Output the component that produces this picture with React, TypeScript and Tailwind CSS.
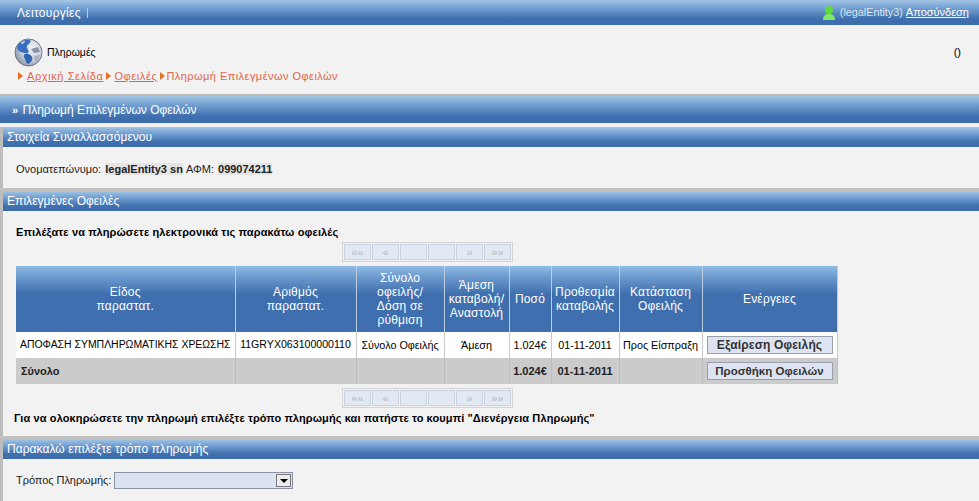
const barGradient = "bg-[linear-gradient(to_bottom,#a3c6e6_0%,#6f9ccf_35%,#3f6fae_75%,#3d6cab_100%)]";
const thGradient = "bg-[linear-gradient(to_bottom,#8fbce3_0px,#6f9ccf_10px,#3f6fae_28px)]";

function Globe() {
  return (
    <svg width="29" height="29" viewBox="0 0 29 29">
      <defs>
        <radialGradient id="g" cx="0.65" cy="0.35" r="0.75">
          <stop offset="0" stopColor="#f2f4f8" />
          <stop offset="0.6" stopColor="#c4cbd8" />
          <stop offset="1" stopColor="#7f8a9d" />
        </radialGradient>
      </defs>
      <circle cx="14.5" cy="14.5" r="13.5" fill="url(#g)" stroke="#6d7686" />
      <path d="M4 7c3-4 8-6 12-5 2 2-2 4-3 6-1 3 3 4 1 7-3 1-5-1-7-1-3-1-5-4-3-7z" fill="#3a6fc0" />
      <path d="M7 5c1-1 3-2 4-2 0 1-2 3-3 3z" fill="#cfe0f5" />
      <path d="M11 16c3-1 6 1 7 3 1 2 0 5-4 7-2-1-2-3-3-5-1-2-2-4 0-5z" fill="#2f63b4" />
      <path d="M17 11l7-2 2 5-6 1z" fill="#8a93a4" />
      <path d="M20 18l6-1-2 6-3 0z" fill="#aab1be" />
    </svg>
  );
}

function User() {
  return (
    <svg width="14" height="16" viewBox="0 0 14 16">
      <circle cx="7" cy="5" r="4" fill="#5fdc3c" />
      <path d="M1 15c0-4 2-5 4-6h4c2 1 4 2 4 6z" fill="#7fe86a" />
    </svg>
  );
}

function Crumb() {
  return <span className="w-0 h-0 border-y-[4px] border-y-transparent border-l-[5px] border-l-[#e8702a] mx-[3px]" />;
}

function Section({ title, className, children }: { title: string; className: string; children: React.ReactNode }) {
  return (
    <section className={"border-l-[3px] border-[#bdbdbd] " + className}>
      <h2 className={"h-[20px] pl-[4px] leading-[21px] text-white text-[12px] tracking-[0.05px] font-normal " + barGradient}>{title}</h2>
      {children}
    </section>
  );
}

function Pager() {
  const labels = ["««", "«", "", "", "»", "»»"];
  return (
    <div className="flex gap-[1px] w-fit h-[20px] ml-[342px] p-[1px] border border-[#d4d4d4] bg-[#f2f2f2]">
      {labels.map((label, i) => (
        <div key={i} className="w-[27px] border border-[#c9d2de] bg-[#e3e9f3] text-[#b4b9c2] text-[11px] leading-[15px] text-center">
          {label}
        </div>
      ))}
    </div>
  );
}

const th = "border-r border-[#b9cde3] px-[1px] text-white font-normal text-[12px] tracking-[0.2px] leading-[14px] text-center align-middle " + thGradient;
const td = "border-r border-[#c9c9c9] bg-white text-[10.8px] text-black px-[4px] text-center h-[26px] whitespace-nowrap";
const tf = "border-r border-[#bdbdbd] bg-[#cbcbcb] text-[11px] font-bold text-[#222] px-[4px] text-center h-[26px] whitespace-nowrap";
const btn = "h-[18px] w-[126px] border border-[#9a9fae] bg-[#dde3f0] text-[#333] font-bold leading-[15px] text-center";

export default function App() {
  return (
    <div className="w-[979px] h-[501px] overflow-hidden bg-[#f2f2f2] font-['Liberation_Sans',Arial,sans-serif] text-[11px] text-black">
      <header className={"flex items-center justify-between h-[25px] text-white " + barGradient}>
        <div className="flex items-center pl-[17px]">
          <span className="text-[12px] tracking-[0.3px]">Λειτουργίες</span>
          <span className="ml-[6px] w-px h-[10px] bg-[#b7cde6]" />
        </div>
        <div className="flex items-center pr-[10px] text-[11px]">
          <User />
          <span className="ml-[4px] text-[#d8e4f2] text-[10.8px]">(legalEntity3)</span>
          <a className="ml-[3px] underline">Αποσύνδεση</a>
        </div>
      </header>

      <div className="h-[69px] pt-[13px] pl-[14px]">
        <div className="flex items-center gap-[4px]">
          <Globe />
          <span className="text-[10.5px] mt-[1px]">Πληρωμές</span>
          <span className="ml-auto mr-[18px] text-[11px]">()</span>
        </div>
        <div className="flex items-center pl-[1px] mt-[1px] text-[11px] tracking-[0.6px] text-[#e0674a]">
          <Crumb />
          <a className="underline ml-[1px]">Αρχική Σελίδα</a>
          <Crumb />
          <a className="underline">Οφειλές</a>
          <Crumb />
          <span className="tracking-[0.45px] -ml-[2px]">Πληρωμή Επιλεγμένων Οφειλών</span>
        </div>
      </div>

      <div className="h-[2px] bg-[#bcbcbc]" />
      <div className={"h-[27px] pl-[12px] leading-[28px] text-white text-[12px] " + barGradient}>
        <span className="font-bold text-[11px] mr-[1px]">»</span> Πληρωμή Επιλεγμένων Οφειλών
      </div>
      <div className="h-[4px] bg-[#f2f2f2]" />

      <Section title="Στοιχεία Συναλλασσόμενου" className="h-[61px]">
        <p className="pt-[14px] pl-[13px] text-[#222]">
          Ονοματεπώνυμο: <b className="ml-[1px] bg-[#e4e4e4]">legalEntity3 sn</b> ΑΦΜ: <b className="ml-[1px] bg-[#e4e4e4]">099074211</b>
        </p>
      </Section>
      <div className="h-[3px] bg-[#c2c2c2]" />

      <Section title="Επιλεγμένες Οφειλές" className="h-[245px]">
        <p className="pt-[14px] pl-[13px] h-[31px] font-bold tracking-[0.13px] leading-[15px]">Επιλέξατε να πληρώσετε ηλεκτρονικά τις παρακάτω οφειλές</p>
        <div className="-ml-[3px]">
          <Pager />
        </div>
        <table className="ml-[13px] mt-[4px] w-[821px] table-fixed border-collapse">
          <colgroup>
            <col className="w-[219px]" />
            <col className="w-[121px]" />
            <col className="w-[88px]" />
            <col className="w-[65px]" />
            <col className="w-[42px]" />
            <col className="w-[68px]" />
            <col className="w-[83px]" />
            <col className="w-[135px]" />
          </colgroup>
          <thead>
            <tr className="h-[66px]">
              <th className={th}>Είδος<br />παραστατ.</th>
              <th className={th}>Αριθμός<br />παραστατ.</th>
              <th className={th}>Σύνολο<br />οφειλής/<br />Δόση σε<br />ρύθμιση</th>
              <th className={th}>Άμεση<br />καταβολή/<br />Αναστολή</th>
              <th className={th}>Ποσό</th>
              <th className={th}>Προθεσμία<br />καταβολής</th>
              <th className={th}>Κατάσταση<br />Οφειλής</th>
              <th className={th}>Ενέργειες</th>
            </tr>
          </thead>
          <tbody>
            <tr>
              <td className={td + " !text-[10.45px]"}>ΑΠΟΦΑΣΗ ΣΥΜΠΛΗΡΩΜΑΤΙΚΗΣ ΧΡΕΩΣΗΣ</td>
              <td className={td + " !text-[10.6px]"}>11GRYX063100000110</td>
              <td className={td}>Σύνολο Οφειλής</td>
              <td className={td}>Άμεση</td>
              <td className={td + " !px-0"}>1.024€</td>
              <td className={td}>01-11-2011</td>
              <td className={td + " !px-0"}>Προς Είσπραξη</td>
              <td className={td + " !px-[4px]"}>
                <button className={btn + " text-[12px] tracking-[0.15px]"}>Εξαίρεση Οφειλής</button>
              </td>
            </tr>
            <tr>
              <td className={tf + " !text-left !pl-[5px]"}>Σύνολο</td>
              <td className={tf} />
              <td className={tf} />
              <td className={tf} />
              <td className={tf + " !px-0"}>1.024€</td>
              <td className={tf}>01-11-2011</td>
              <td className={tf} />
              <td className={tf + " !px-[4px]"}>
                <button className={btn + " text-[11.5px]"}>Προσθήκη Οφειλών</button>
              </td>
            </tr>
          </tbody>
        </table>
        <div className="mt-[4px] -ml-[3px]">
          <Pager />
        </div>
        <p className="pt-[3px] pl-[11px] font-bold tracking-[0.11px] leading-[15px]">Για να ολοκηρώσετε την πληρωμή επιλέξτε τρόπο πληρωμής και πατήστε το κουμπί "Διενέργεια Πληρωμής"</p>
      </Section>
      <div className="h-[3px] bg-[#c2c2c2]" />

      <Section title="Παρακαλώ επιλέξτε τρόπο πληρωμής" className="h-[62px]">
        <div className="flex items-center pt-[13px] pl-[13px] gap-[3px] text-[#222]">
          <span className="tracking-[-0.05px]">Τρόπος Πληρωμής:</span>
          <div className="flex justify-end w-[179px] h-[17px] border border-[#8a93a6] bg-[#dbe2f0] p-[1px]">
            <div className="flex items-center justify-center w-[15px] border border-[#777] bg-[#ececec]">
              <span className="w-0 h-0 border-x-[4px] border-x-transparent border-t-[4px] border-t-black" />
            </div>
          </div>
        </div>
      </Section>
    </div>
  );
}
